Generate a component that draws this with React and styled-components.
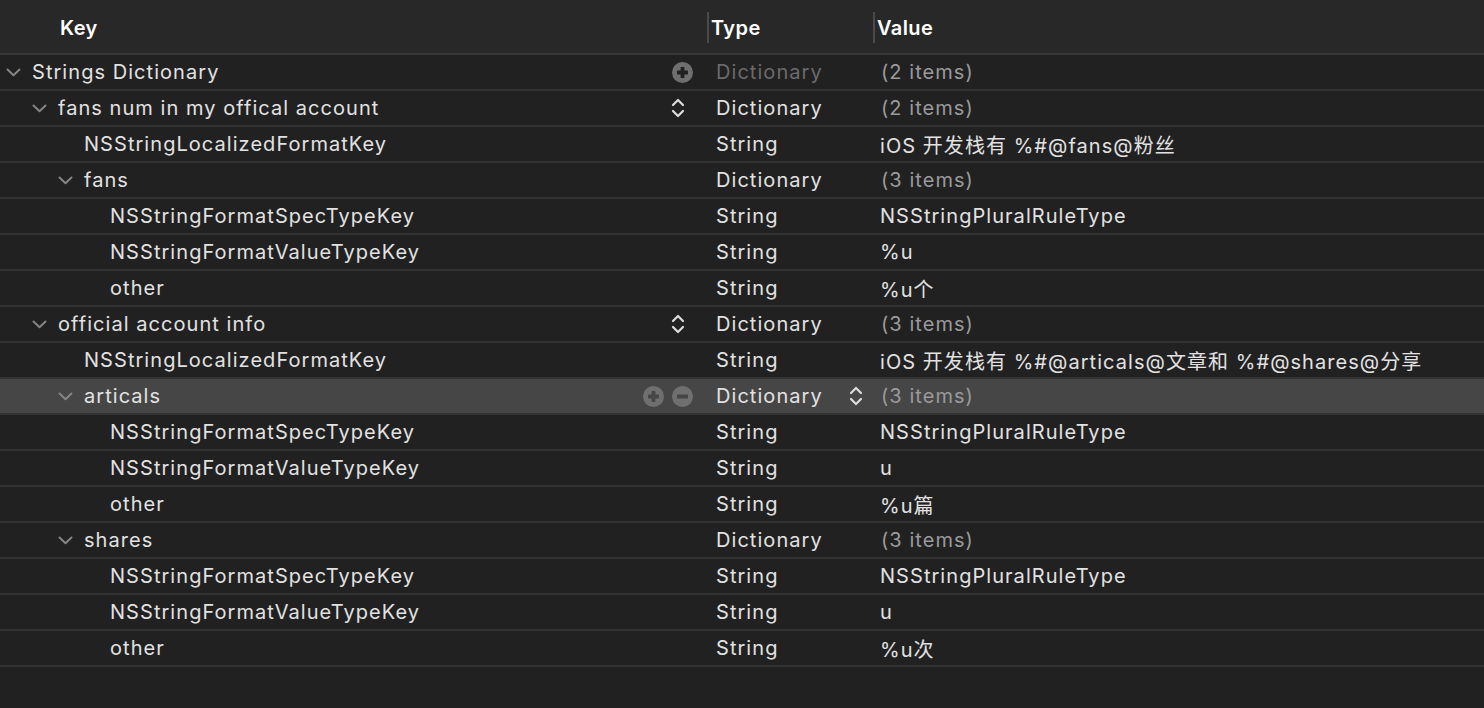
import React from "react";
import styled, { createGlobalStyle, css } from "styled-components";

const GlobalStyle = createGlobalStyle`
  html, body {
    margin: 0;
    padding: 0;
    background: #212121;
  }
  body {
    font-family: Inter, "Noto Sans CJK SC", sans-serif;
    -webkit-font-smoothing: antialiased;
  }
`;

const KEY_W = 707;
const TYPE_W = 166;

const Editor = styled.div`
  width: 1484px;
  height: 708px;
  background: #212121;
  display: flex;
  flex-direction: column;
  color: #dedede;
  font-family: Inter, "Noto Sans CJK SC", sans-serif;
  font-size: 20px;
  letter-spacing: 1.05px;
  overflow: hidden;
`;

const Header = styled.div`
  height: 53px;
  display: grid;
  grid-template-columns: ${KEY_W}px ${TYPE_W}px 1fr;
  background: #282828;
  border-bottom: 2px solid #383838;
`;

const HeaderCell = styled.div`
  display: flex;
  align-items: center;
  padding-left: ${(p) => p.$pad}px;
  padding-top: 2px;
  font-weight: 600;
  font-size: 20px;
  letter-spacing: 0.4px;
  color: #ffffff;
  position: relative;
  ${(p) =>
    p.$divider &&
    css`
      &::before {
        content: "";
        position: absolute;
        left: 0;
        top: 12px;
        height: 31px;
        width: 2px;
        background: #4a4a4a;
      }
    `}
`;

const Row = styled.div`
  height: 34px;
  display: grid;
  grid-template-columns: ${KEY_W}px ${TYPE_W}px 1fr;
  border-bottom: 2px solid #333333;
  background: ${(p) => (p.$selected ? "#464646" : "#212121")};
`;

const KeyCell = styled.div`
  display: flex;
  align-items: center;
  padding-left: ${(p) => 6 + p.$level * 26}px;
  padding-right: 14px;
  min-width: 0;
`;

const Disclosure = styled.span`
  width: 26px;
  flex: 0 0 26px;
  display: flex;
  align-items: center;
  color: #858585;
`;

const KeyText = styled.span`
  flex: 1;
  white-space: nowrap;
  color: #e2e2e2;
`;

const Controls = styled.span`
  display: flex;
  align-items: center;
  gap: 8px;
  margin-right: ${(p) => (p.$inset ? 8 : 0)}px;
`;

const TypeCell = styled.div`
  display: flex;
  align-items: center;
  justify-content: space-between;
  padding-left: 9px;
  padding-right: 10px;
  color: ${(p) => (p.$dim ? "#6b6b6b" : "#e2e2e2")};
`;

const ValueCell = styled.div`
  display: flex;
  align-items: center;
  padding-left: ${(p) => (p.$muted ? 8 : 7)}px;
  white-space: nowrap;
  color: ${(p) => (p.$muted ? "#9a9a9a" : "#e2e2e2")};
`;

const Chevron = () => (
  <svg width="15" height="9" viewBox="0 0 15 9" fill="none">
    <path d="M1.5 1.5 L7.5 7.2 L13.5 1.5" stroke="currentColor" strokeWidth="2" strokeLinecap="round" strokeLinejoin="round" />
  </svg>
);

const UpDown = () => (
  <svg width="14" height="22" viewBox="0 0 14 22" fill="none">
    <path d="M2 8 L7 3 L12 8" stroke="#dcdcdc" strokeWidth="2.2" strokeLinecap="round" strokeLinejoin="round" />
    <path d="M2 14 L7 19 L12 14" stroke="#dcdcdc" strokeWidth="2.2" strokeLinecap="round" strokeLinejoin="round" />
  </svg>
);

const CircleBtn = ({ kind, bg }) => (
  <svg width="21" height="21" viewBox="0 0 21 21">
    <circle cx="10.5" cy="10.5" r="10.5" fill="#6f6f6f" />
    <rect x="5" y="8.6" width="11" height="3.8" rx="0.6" fill={bg} />
    {kind === "plus" && <rect x="8.6" y="5" width="3.8" height="11" rx="0.6" fill={bg} />}
  </svg>
);

const rows = [
  { level: 0, open: true, key: "Strings Dictionary", type: "Dictionary", dimType: true, value: "(2 items)", muted: true, controls: "plus" },
  { level: 1, open: true, key: "fans num in my offical account", type: "Dictionary", value: "(2 items)", muted: true, controls: "updown" },
  { level: 2, key: "NSStringLocalizedFormatKey", type: "String", value: "iOS 开发栈有 %#@fans@粉丝" },
  { level: 2, open: true, key: "fans", type: "Dictionary", value: "(3 items)", muted: true },
  { level: 3, key: "NSStringFormatSpecTypeKey", type: "String", value: "NSStringPluralRuleType" },
  { level: 3, key: "NSStringFormatValueTypeKey", type: "String", value: "%u" },
  { level: 3, key: "other", type: "String", value: "%u个" },
  { level: 1, open: true, key: "official account info", type: "Dictionary", value: "(3 items)", muted: true, controls: "updown" },
  { level: 2, key: "NSStringLocalizedFormatKey", type: "String", value: "iOS 开发栈有 %#@articals@文章和 %#@shares@分享" },
  { level: 2, open: true, key: "articals", type: "Dictionary", value: "(3 items)", muted: true, controls: "plusminus", selected: true, typeMenu: true },
  { level: 3, key: "NSStringFormatSpecTypeKey", type: "String", value: "NSStringPluralRuleType" },
  { level: 3, key: "NSStringFormatValueTypeKey", type: "String", value: "u" },
  { level: 3, key: "other", type: "String", value: "%u篇" },
  { level: 2, open: true, key: "shares", type: "Dictionary", value: "(3 items)", muted: true },
  { level: 3, key: "NSStringFormatSpecTypeKey", type: "String", value: "NSStringPluralRuleType" },
  { level: 3, key: "NSStringFormatValueTypeKey", type: "String", value: "u" },
  { level: 3, key: "other", type: "String", value: "%u次" },
];

function RowControls({ kind, bg }) {
  if (kind === "plus") return <Controls><CircleBtn kind="plus" bg={bg} /></Controls>;
  if (kind === "plusminus")
    return (
      <Controls>
        <CircleBtn kind="plus" bg={bg} />
        <CircleBtn kind="minus" bg={bg} />
      </Controls>
    );
  if (kind === "updown") return <Controls $inset><UpDown /></Controls>;
  return null;
}

export default function App() {
  return (
    <Editor>
      <GlobalStyle />
      <Header>
        <HeaderCell $pad={60}>Key</HeaderCell>
        <HeaderCell $pad={4} $divider>Type</HeaderCell>
        <HeaderCell $pad={4} $divider>Value</HeaderCell>
      </Header>
      {rows.map((r, i) => {
        const bg = r.selected ? "#464646" : "#212121";
        return (
          <Row key={i} $selected={r.selected}>
            <KeyCell $level={r.level}>
              <Disclosure>{r.open && <Chevron />}</Disclosure>
              <KeyText>{r.key}</KeyText>
              <RowControls kind={r.controls} bg={bg} />
            </KeyCell>
            <TypeCell $dim={r.dimType}>
              <span>{r.type}</span>
              {r.typeMenu && <UpDown />}
            </TypeCell>
            <ValueCell $muted={r.muted}>{r.value}</ValueCell>
          </Row>
        );
      })}
    </Editor>
  );
}
